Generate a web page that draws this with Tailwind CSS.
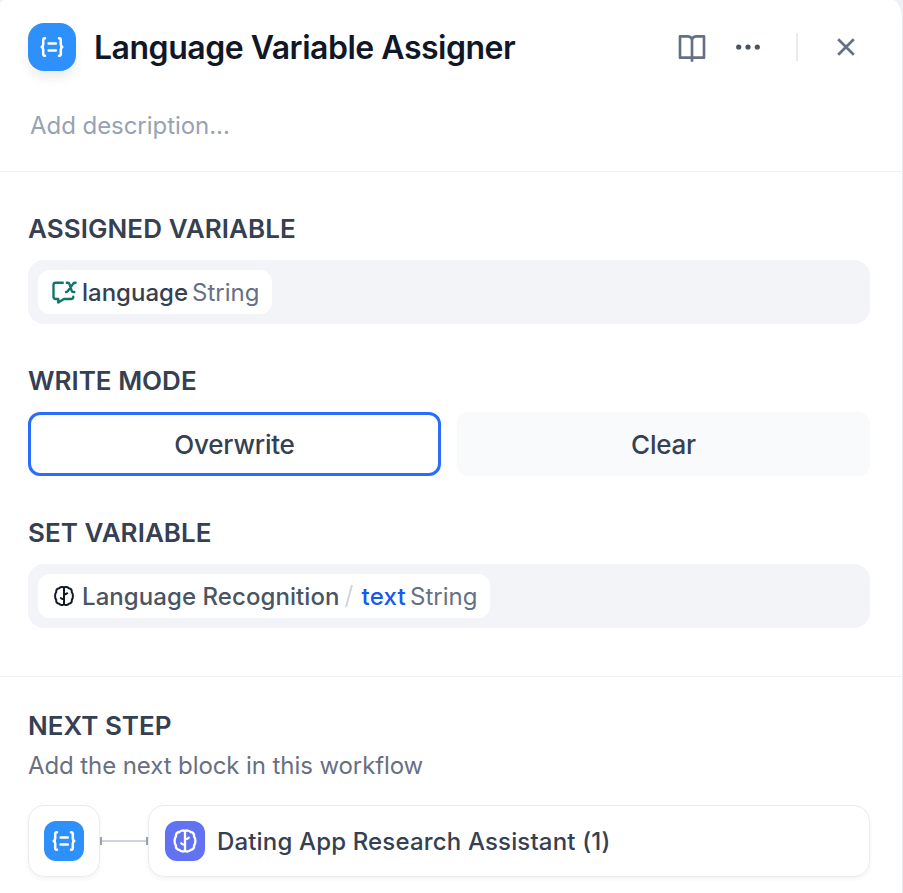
<!DOCTYPE html>
<html lang="en">
<head>
<meta charset="utf-8">
<title>Language Variable Assigner</title>
<script src="https://cdn.jsdelivr.net/npm/@tailwindcss/browser@4"></script>
</head>
<body class="w-[903px] h-[893px] overflow-hidden bg-[#eff0f6] font-['Inter',sans-serif]">
<svg class="hidden">
  <symbol id="assign" viewBox="0 0 24 24" fill="none" stroke="currentColor" stroke-width="2.500" stroke-linecap="round" stroke-linejoin="round">
    <path d="M5 3.200H4.800Q3.200 3.200 3.200 5V9.500Q3.200 11.300 1.700 12Q3.200 12.700 3.200 14.500V19Q3.200 20.800 4.800 20.800H5M19 3.200H19.200Q20.800 3.200 20.800 5V9.500Q20.800 11.300 22.300 12Q20.800 12.700 20.800 14.500V19Q20.800 20.800 19.200 20.800H19M8.600 8.600H15.800M8.600 15.400H15.800"/>
  </symbol>
  <symbol id="brain" viewBox="0 0 24 24" fill="none" stroke="currentColor" stroke-width="2" stroke-linejoin="round" stroke-linecap="round">
    <path d="M12 3.500C10.700 2.700 8.200 2.800 7.300 4.300C5.200 4.500 4 6 4.200 8.200C2.700 10 2.700 14 4.200 15.800C4 18 5.200 19.500 7.300 19.700C8.200 21.200 10.700 21.300 12 20.500C13.300 21.300 15.800 21.200 16.700 19.700C18.800 19.500 20 18 19.800 15.800C21.300 14 21.300 10 19.800 8.200C20 6 18.800 4.500 16.700 4.300C15.800 2.800 13.300 2.700 12 3.500ZM12 3.500V20.500M12 10.400Q14.400 10.300 15.200 9.200M12 15.200Q9.600 15.100 8.800 14"/>
  </symbol>
</svg>
<main class="w-[903px] h-[893px] bg-white border-r border-[#e9eaec] rounded-tl-[5px] rounded-tr-[10px_20px] flex flex-col">
  <header class="h-[172px] shrink-0 border-b border-[#f0f0f2] pt-[23px] pl-7">
    <div class="flex items-center h-12">
      <div class="size-12 rounded-2xl bg-[#2e90fa] text-white flex items-center justify-center shadow-[0_8px_12px_-2px_rgba(16,24,40,0.09)]"><svg class="size-6"><use href="#assign"/></svg></div>
      <h1 class="ml-[18px] pt-[2px] w-[560px] whitespace-nowrap text-[32px] leading-[48px] tracking-[-0.48px] font-semibold text-[#101828]">Language Variable Assigner</h1>
      <svg class="ml-[22px] w-8 h-8" viewBox="0 0 24 24" fill="#667085"><path d="M13 21V23H11V21H3C2.448 21 2 20.552 2 20V4C2 3.448 2.448 3 3 3H9C10.195 3 11.267 3.524 12 4.354C12.733 3.524 13.805 3 15 3H21C21.552 3 22 3.448 22 4V20C22 20.552 21.552 21 21 21H13ZM20 19V5H15C13.895 5 13 5.895 13 7V19H20ZM11 19V7C11 5.895 10.105 5 9 5H4V19H11Z"/></svg>
      <svg class="ml-6 w-8 h-8" viewBox="0 0 32 32" fill="#475467"><circle cx="6.700" cy="16" r="2.600"/><circle cx="16" cy="16" r="2.600"/><circle cx="25.300" cy="16" r="2.600"/></svg>
      <div class="ml-8 w-[2px] h-7 bg-[#eaebed]"></div>
      <svg class="ml-8 size-8" viewBox="0 0 32 32" stroke="#667085" stroke-width="2.700"><path d="M8.200 8.200L23.800 23.800M23.800 8.200L8.200 23.800"/></svg>
    </div>
    <p class="mt-[37px] ml-[2px] text-[24px] leading-9 tracking-[-0.05px] text-[#98a2b3]">Add description...</p>
  </header>
  <section class="h-[505px] shrink-0 pt-[37px] pl-7 pr-8 border-b border-[#f0f0f2]">
    <h2 class="h-10 leading-10 text-[26px] tracking-[0.08px] font-semibold text-[#354052]">ASSIGNED VARIABLE</h2>
    <div class="mt-[11px] h-16 rounded-2xl bg-[#f2f4f7] p-[10px] flex">
      <div class="w-[234px] h-11 rounded-xl bg-white flex items-center pl-3 text-[24px] whitespace-nowrap">
        <svg class="size-7 shrink-0" viewBox="0 0 16 16" fill="none" stroke="#107569" stroke-width="1.350" stroke-linecap="round" stroke-linejoin="round"><path d="M7.300 2.700H3.300Q2 2.700 2 4V10.700Q2 12 3.300 12H4.700V14L8 12H12Q13.300 12 13.300 10.700M9.600 2.700H10.200Q10.900 2.700 11.100 3.300L12.400 7.400Q12.600 8 13.300 8H13.900M14.600 2.700H14.300Q13.700 2.700 13.300 3.200L10.200 7.400Q9.800 8 9.200 8"/></svg>
        <span class="ml-1 pt-[2px] font-medium text-[#354052]">language</span><span class="ml-1 pt-[2px] text-[#676f83]">String</span>
      </div>
    </div>
    <h2 class="mt-[37px] h-10 leading-10 text-[26px] font-semibold text-[#354052]">WRITE MODE</h2>
    <div class="mt-[11px] grid grid-cols-2 gap-4 text-[26px] tracking-[-0.22px] font-medium text-[#354052]">
      <div class="h-16 rounded-xl border-[3px] border-[#296dff] flex items-center justify-center">Overwrite</div>
      <div class="h-16 rounded-xl bg-[#f9fafb] flex items-center justify-center">Clear</div>
    </div>
    <h2 class="mt-[37px] h-10 leading-10 text-[26px] tracking-[0.06px] font-semibold text-[#354052]">SET VARIABLE</h2>
    <div class="mt-[11px] h-16 rounded-2xl bg-[#f2f4f7] p-[10px] flex">
      <div class="w-[452px] h-11 rounded-xl bg-white flex items-center pl-[14px] text-[24px] whitespace-nowrap">
        <svg class="size-6 shrink-0 text-[#101828]"><use href="#brain"/></svg>
        <span class="ml-[6px] pt-[2px] tracking-[0.07px] font-medium text-[#495464]">Language Recognition</span>
        <svg class="ml-1 w-3 h-6" viewBox="0 0 12 24" stroke="#d0d5dc" stroke-width="2"><path d="M2 23L8 1"/></svg>
        <span class="ml-[6px] pt-[2px] tracking-[0.25px] font-medium text-[#155aef]">text</span><span class="ml-1 pt-[2px] text-[#676f83]">String</span>
      </div>
    </div>
  </section>
  <section class="pt-[29px] pl-7 pr-8">
    <h2 class="h-10 leading-10 text-[26px] font-semibold text-[#354052]">NEXT STEP</h2>
    <p class="h-10 leading-10 text-[24px] tracking-[-0.09px] text-[#676f83]">Add the next block in this workflow</p>
    <div class="mt-[19px] flex items-center">
      <div class="size-[72px] rounded-2xl border border-[#ebebed] flex items-center justify-center shadow-[0_2px_4px_rgba(16,24,40,0.05)]">
        <div class="size-10 rounded-xl bg-[#2e90fa] text-white flex items-center justify-center"><svg class="size-6"><use href="#assign"/></svg></div>
      </div>
      <div class="w-[48px] flex items-center"><div class="w-[2px] h-2 bg-[#98a2b3]"></div><div class="flex-1 h-[2px] bg-[#d0d5dc]"></div><div class="w-[2px] h-2 bg-[#98a2b3]"></div></div>
      <div class="flex-1 h-[72px] rounded-2xl border border-[#ebebed] flex items-center pl-4 shadow-[0_2px_4px_rgba(16,24,40,0.05)]">
        <div class="size-10 rounded-xl bg-[#6172f3] text-white flex items-center justify-center"><svg class="size-7"><use href="#brain"/></svg></div>
        <span class="ml-3 pt-[2px] text-[24px] tracking-[0.16px] font-medium text-[#354052]">Dating App Research Assistant (1)</span>
      </div>
    </div>
  </section>
</main>
</body>
</html>
